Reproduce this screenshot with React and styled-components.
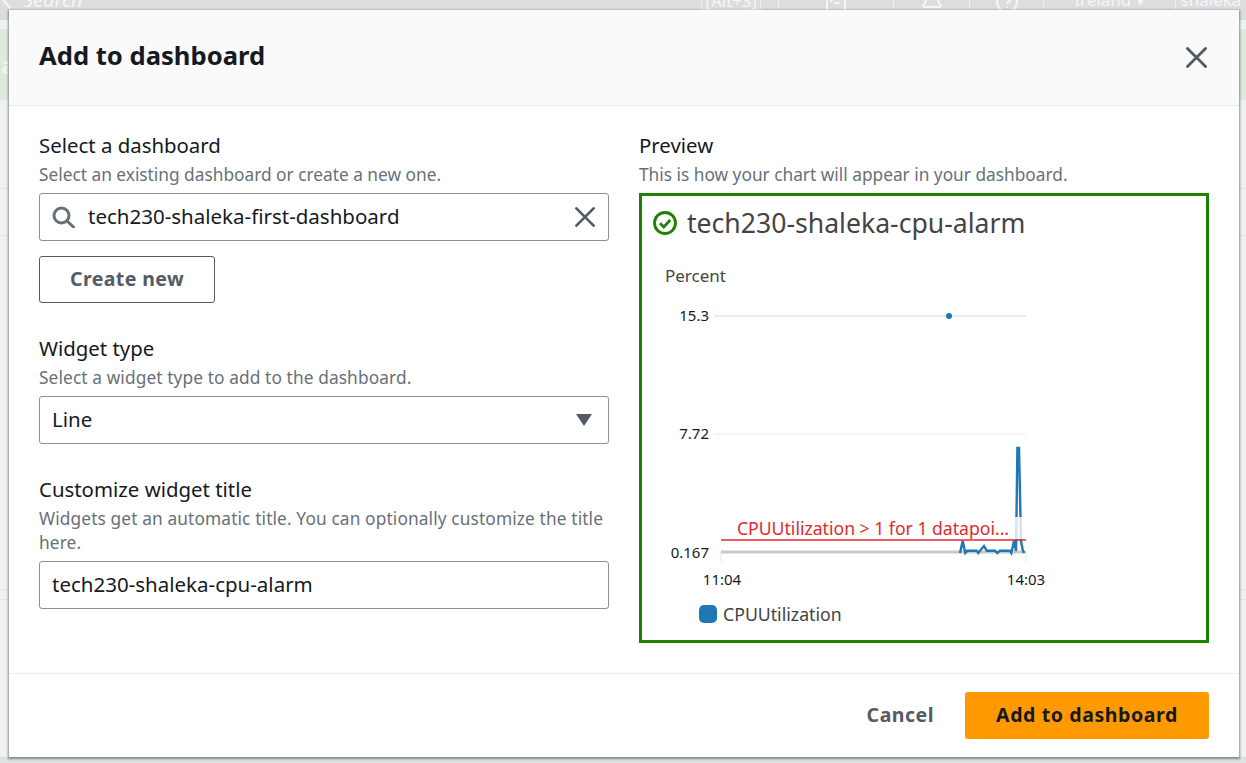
import React from 'react';
import styled, { createGlobalStyle } from 'styled-components';
import { Bell, ChevronLeft, CircleHelp, SquareTerminal } from 'lucide-react';

const GlobalStyle = createGlobalStyle`
    html, body {
        margin: 0;
        padding: 0;
        height: 100%;
        overflow: hidden;
        font-family: "Noto Sans", "Open Sans", sans-serif;
        color: #16191f;
    }
`;

// Dimmed console page behind the modal
const Page = styled.div`
    position: relative;
    display: flex;
    flex-direction: column;
    width: 1246px;
    height: 763px;
    overflow: hidden;
    background: #f0f1f1;
`;

const TopBar = styled.div`
    display: flex;
    flex: none;
    height: 30px;
    margin-top: -10px;
    background: #dcdddf;
    color: #f6f6f6;
    font-size: 17px;
    line-height: 20px;
`;

const SearchArea = styled.div`
    flex: 1;
    display: flex;
    justify-content: space-between;
    padding: 0 17px 0 0;
`;

const SearchGhost = styled.span`
    display: flex;
    font-size: 20px;
    font-style: italic;
    svg { margin: -2px 3px 0 -6px; }
`;

const ShortcutGhost = styled.span`
    padding: 0 3px;
    height: 18px;
    border: 1px solid #f0f0f0;
`;

const TopCell = styled.div`
    width: ${({ $w }) => $w}px;
    height: 20px;
    display: flex;
    justify-content: center;
    border-left: 1px solid #eceded;
    box-sizing: border-box;
    white-space: nowrap;
    overflow: hidden;
`;

const Banner = styled.div`
    flex: none;
    height: 71px;
    margin-top: 9px;
    padding-top: 20px;
    box-sizing: border-box;
    background: #deeadd;
    color: #f4f8f4;
    font-size: 24px;
    line-height: 32px;
    font-weight: 700;
    text-indent: -14px;
`;

const GhostRow = styled.div`
    flex: none;
    height: ${({ $h }) => $h}px;
    box-sizing: border-box;
    border-bottom: 1px solid ${({ $line }) => $line || 'transparent'};
`;

const BottomStrip = styled.div`
    flex: 1;
    background: #dfe2e2;
`;

const Modal = styled.div`
    position: absolute;
    left: 9px;
    top: 10px;
    width: 1230px;
    height: 747px;
    display: flex;
    flex-direction: column;
    background: #fff;
    box-shadow: 0 1px 2px 1px rgba(70, 80, 85, 0.6);
`;

const Header = styled.header`
    display: flex;
    flex: none;
    align-items: center;
    justify-content: space-between;
    height: 96px;
    padding: 0 32px 4px 30px;
    box-sizing: border-box;
    background: #fafafa;
    border-bottom: 1px solid #eaeded;
`;

const Title = styled.h2`
    margin: 0;
    font-size: 25.6px;
    font-weight: 700;
    line-height: 32px;
`;

const CloseButton = styled.span`
    display: flex;
    margin-top: ${({ $top }) => $top || 0}px;
    color: #545b64;
`;

const Body = styled.div`
    flex: 1;
    display: grid;
    grid-template-columns: 570px 570px;
    column-gap: 30px;
    padding: 25px 30px 0;
`;

const Column = styled.div`
    display: flex;
    flex-direction: column;
`;

const Field = styled.div`
    margin-bottom: 31px;
`;

const Label = styled.div`
    font-size: 20.4px;
    line-height: 28px;
    margin-bottom: 4px;
    color: #16191f;
`;

const Hint = styled.div`
    font-size: 17.3px;
    line-height: 24px;
    letter-spacing: ${({ $track }) => $track || 0}px;
    color: #687078;
    margin-bottom: 6px;
`;

const InputBox = styled.div`
    display: flex;
    align-items: center;
    height: 48px;
    padding: 0 13px 0 12px;
    box-sizing: border-box;
    gap: 13px;
    font-size: 20.5px;
    border: 1px solid #879596;
    border-radius: 3px;
    background: #fff;
    color: #16191f;
`;

const InputText = styled.span`
    flex: 1;
    padding-bottom: 2px;
`;

const OutlineButton = styled.button`
    display: block;
    width: 176px;
    height: 47px;
    margin-top: 15px;
    padding: 0 0 2px;
    font: 700 19.5px "Noto Sans", sans-serif;
    letter-spacing: 0.4px;
    color: #545b64;
    background: #fff;
    border: 1px solid #545b64;
    border-radius: 3px;
`;

const Caret = styled.span`
    width: 0;
    height: 0;
    margin-right: 3px;
    border-left: 8px solid transparent;
    border-right: 8px solid transparent;
    border-top: 12px solid #545b64;
`;

const PreviewBox = styled.div`
    height: 450px;
    padding: 10px 11px 0;
    box-sizing: border-box;
    border: 3px solid #1d8102;
`;

const PreviewTitle = styled.div`
    display: flex;
    align-items: center;
    gap: 10px;
    font-size: 26.6px;
    line-height: 34px;
    color: #444;
`;

const ChartFrame = styled.div`
    height: 372px;
    margin-top: -1px;
`;

const Footer = styled.footer`
    display: flex;
    flex: none;
    align-items: center;
    justify-content: flex-end;
    gap: 31px;
    height: 84px;
    padding: 0 30px;
    box-sizing: border-box;
    border-top: 1px solid #eaeded;
`;

const LinkButton = styled.button`
    padding: 0 0 2px;
    border: 0;
    background: none;
    font: 700 19.5px "Noto Sans", sans-serif;
    letter-spacing: 0.5px;
    color: #545b64;
`;

const PrimaryButton = styled.button`
    width: 244px;
    height: 47px;
    padding: 0 0 2px;
    border: 0;
    border-radius: 3px;
    background: #ff9900;
    font: 700 19.5px "Noto Sans", sans-serif;
    letter-spacing: 0.6px;
    color: #16191f;
`;

const chartFont = '"Noto Sans", sans-serif';

const smallLine =
    '307,314 309.7,302 312.3,314 314.3,311.7 323.7,311.7 325.3,314 327,311.7 331,307 ' +
    '333.7,311.7 342,311.7 344.3,314 347,311.7 357,311.7 358.3,314 361,302 363,312 ' +
    '364.4,209 366,209 368,302 369.7,311 371,314';

const Chart = () => (
    <svg width="540" height="400" viewBox="0 0 540 400" style={{ display: 'block' }}>
        <g fontFamily={chartFont} fontSize="15" fill="#16191f">
            <text x="12" y="43" fontSize="17" fill="#444">Percent</text>
            <text x="56" y="82" textAnchor="end">15.3</text>
            <text x="56" y="200" textAnchor="end">7.72</text>
            <text x="56" y="319" textAnchor="end">0.167</text>
            <text x="69" y="346" textAnchor="middle">11:04</text>
            <text x="373" y="346" textAnchor="middle">14:03</text>
            <text x="70" y="382" fontSize="17.7" fill="#444">CPUUtilization</text>
        </g>
        <line x1="61" x2="373" y1="77" y2="77" stroke="#e9ebed" strokeWidth="2" />
        <circle cx="296" cy="77" r="3" fill="#1f77b4" />
        <line x1="61" x2="373" y1="195" y2="195" stroke="#e9ebed" />
        <line x1="68" x2="68" y1="313" y2="323" stroke="#e8e8e8" />
        <line x1="373" x2="373" y1="313" y2="323" stroke="#e8e8e8" />
        <line x1="68" x2="373" y1="313" y2="313" stroke="#c8c8c8" strokeWidth="3" />
        <polyline points={smallLine} fill="none" stroke="#1f77b4" strokeWidth="2.4" />
        <rect x="80" y="278" width="293" height="22" fill="#fff" fillOpacity="0.8" />
        <line x1="68" x2="373" y1="301" y2="301" stroke="#df2a2f" strokeWidth="1.5" />
        <text x="84" y="296" fontFamily={chartFont} fontSize="17.6" fill="#df2a2f">CPUUtilization &gt; 1 for 1 datapoi...</text>
        <rect x="46" y="366" width="18" height="18" rx="5" fill="#1f77b4" />
    </svg>
);

const CheckIcon = () => (
    <svg width="24" height="24" viewBox="0 0 24 24" fill="none" stroke="#1d8102" strokeWidth="2.8">
        <circle cx="12" cy="12" r="10.5" />
        <path d="M7 12.2l3.8 3.8 6.4-7" />
    </svg>
);

const SearchIcon = () => (
    <svg width="23" height="22" viewBox="0 0 23 22" fill="none" stroke="#687078" strokeWidth="3">
        <circle cx="9.5" cy="9.5" r="7.5" />
        <path d="M15 15l6.5 6" strokeLinecap="round" />
    </svg>
);

const CrossIcon = ({ size }) => (
    <svg width={size} height={size} viewBox="0 0 20 20" fill="none" stroke="currentColor" strokeWidth="2.7" strokeLinecap="round">
        <path d="M1.4 1.4l17.2 17.2M18.6 1.4L1.4 18.6" />
    </svg>
);

const App = () => {
    return (
        <Page>
            <GlobalStyle />
            <TopBar>
                <SearchArea>
                    <SearchGhost><ChevronLeft size={26} />Search</SearchGhost>
                    <ShortcutGhost>[Alt+S]</ShortcutGhost>
                </SearchArea>
                <TopCell $w={115}><SquareTerminal size={24} /></TopCell>
                <TopCell $w={76}><Bell size={24} /></TopCell>
                <TopCell $w={74}><CircleHelp size={24} /></TopCell>
                <TopCell $w={132}>Ireland ▾</TopCell>
                <TopCell $w={71}>shaleka</TopCell>
            </TopBar>
            <Banner>Ca</Banner>
            <GhostRow $h={89} $line="#e6e8e8" />
            <GhostRow $h={47} $line="#e6e8e8" />
            <GhostRow $h={354} $line="#f3dcdc" />
            <GhostRow $h={10} $line="#e3e6e8" />
            <GhostRow $h={157} />
            <BottomStrip />
            <Modal>
                <Header>
                    <Title>Add to dashboard</Title>
                    <CloseButton $top={3}><CrossIcon size={21} /></CloseButton>
                </Header>
                <Body>
                    <Column>
                        <Field>
                            <Label>Select a dashboard</Label>
                            <Hint>Select an existing dashboard or create a new one.</Hint>
                            <InputBox>
                                <SearchIcon />
                                <InputText>tech230-shaleka-first-dashboard</InputText>
                                <CloseButton><CrossIcon size={20} /></CloseButton>
                            </InputBox>
                            <OutlineButton>Create new</OutlineButton>
                        </Field>
                        <Field>
                            <Label>Widget type</Label>
                            <Hint $track={0.11}>Select a widget type to add to the dashboard.</Hint>
                            <InputBox>
                                <InputText>Line</InputText>
                                <Caret />
                            </InputBox>
                        </Field>
                        <Field>
                            <Label>Customize widget title</Label>
                            <Hint $track={0.13}>Widgets get an automatic title. You can optionally customize the title here.</Hint>
                            <InputBox>
                                <InputText>tech230-shaleka-cpu-alarm</InputText>
                            </InputBox>
                        </Field>
                    </Column>
                    <Column>
                        <Label>Preview</Label>
                        <Hint>This is how your chart will appear in your dashboard.</Hint>
                        <PreviewBox>
                            <PreviewTitle><CheckIcon />tech230-shaleka-cpu-alarm</PreviewTitle>
                            <ChartFrame><Chart /></ChartFrame>
                        </PreviewBox>
                    </Column>
                </Body>
                <Footer>
                    <LinkButton>Cancel</LinkButton>
                    <PrimaryButton>Add to dashboard</PrimaryButton>
                </Footer>
            </Modal>
        </Page>
    );
};

export default App;
